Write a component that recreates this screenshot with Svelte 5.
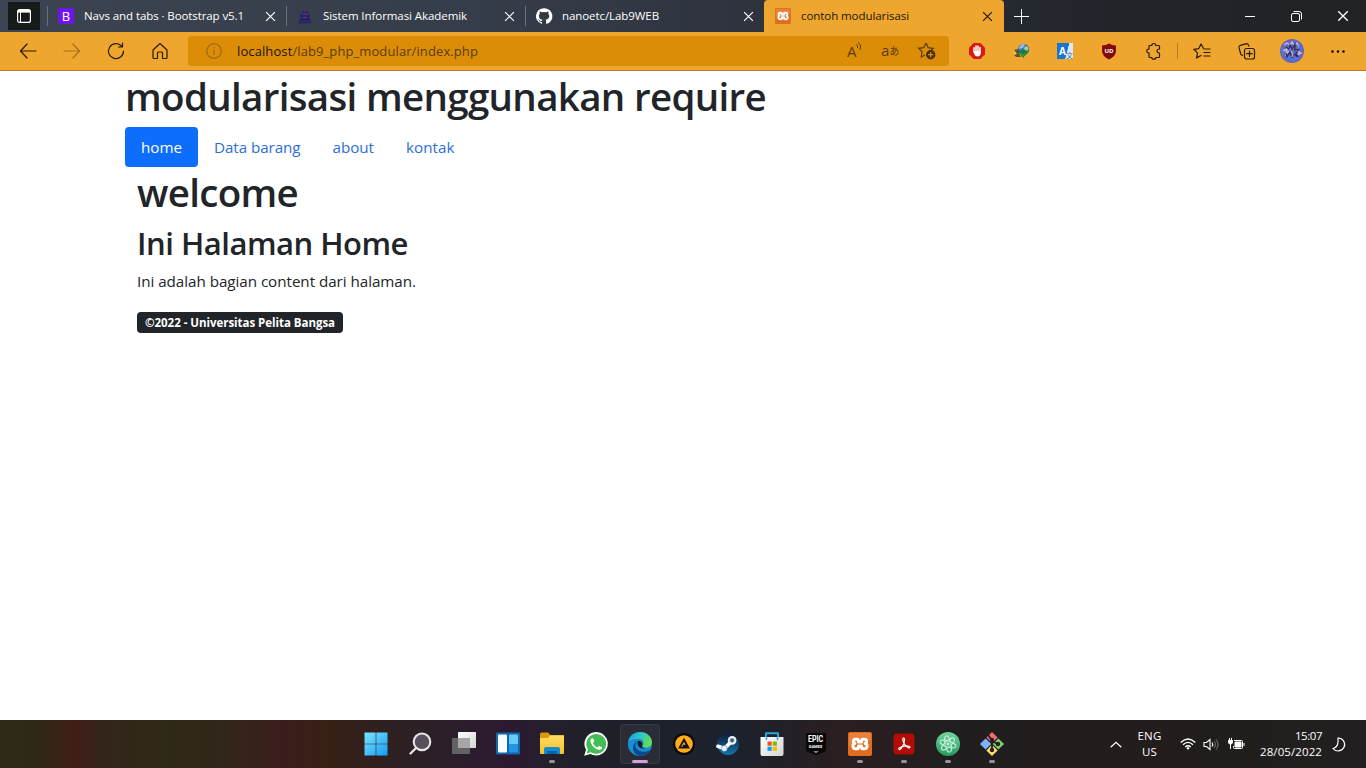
<script>
  // Spreads a label's letters evenly so that it takes the given width.
  function fit(node, width) {
    const natural = node.getBoundingClientRect().width;
    const spacing = (width - natural) / node.textContent.length;
    node.style.letterSpacing = `${spacing}px`;
  }

  const tabs = [
    { icon: 'bootstrap', title: 'Navs and tabs · Bootstrap v5.1', width: 160 },
    { icon: 'campus', title: 'Sistem Informasi Akademik', width: 144 },
    { icon: 'github', title: 'nanoetc/Lab9WEB', width: 97 },
    { icon: 'xampp', title: 'contoh modularisasi', width: 108, active: true }
  ];
  const links = [
    { label: 'home', width: 41, active: true },
    { label: 'Data barang', width: 86.5 },
    { label: 'about', width: 41.5 },
    { label: 'kontak', width: 48.5 }
  ];
  const apps = [
    { icon: 'windows' }, { icon: 'search' }, { icon: 'taskview' }, { icon: 'widgets' },
    { icon: 'folder', open: true }, { icon: 'whatsapp' }, { icon: 'edge', current: true },
    { icon: 'aimp' }, { icon: 'steam' }, { icon: 'store' }, { icon: 'epic' },
    { icon: 'xampp', open: true }, { icon: 'acrobat', open: true },
    { icon: 'atom', open: true }, { icon: 'git', open: true }
  ];
</script>

{#snippet icon(name, size)}
  <svg class="icon" width={size} height={size} viewBox="0 0 24 24" fill="none" stroke-linecap="round" stroke-linejoin="round">
    {#if name === 'bootstrap'}
      <rect width="24" height="24" rx="3" fill="#7014ee" />
    {:else if name === 'campus'}
      <path d="M2 23h20l-2-4 1-1-2-2v-6l-3-4-4-5-4 5-3 4v6l-2 2 1 1z" fill="#24215c" />
      <path d="M7 10h10M5 15h14M4 20h16M9 6v4M15 6v4" stroke="#30308c" stroke-width="1.5" />
      <path d="M12 2v4M9 9h6M10 14h4" stroke="#81395e" stroke-width="1.5" />
    {:else if name === 'github'}
      <path fill="#fff" d="M12 .3a12 12 0 0 0-3.8 23.4c.6.1.8-.3.8-.6v-2.2c-3.3.7-4-1.4-4-1.4-.6-1.4-1.4-1.8-1.4-1.8-1-.7.1-.7.1-.7 1.2 0 1.9 1.2 1.9 1.2 1 1.8 2.8 1.3 3.5 1 .1-.8.4-1.3.8-1.6-2.7-.3-5.5-1.3-5.5-6 0-1.2.5-2.3 1.3-3.1-.2-.4-.6-1.6 0-3.2 0 0 1-.3 3.4 1.2a11.5 11.5 0 0 1 6 0c2.3-1.5 3.3-1.2 3.3-1.2.7 1.6.2 2.8.1 3.2.8.8 1.3 1.9 1.3 3.2 0 4.6-2.8 5.6-5.5 5.9.5.4.9 1.1.9 2.3v3.3c0 .3.1.7.8.6A12 12 0 0 0 12 .3" />
    {:else if name === 'xampp'}
      <rect width="24" height="24" rx="2" fill="#e06c20" />
      <path d="M1 1h22v7Q12 8 1 14z" fill="#f08d48" opacity=".65" />
      <path d="M7.5 7.2h1.6q1.3 0 1.3 1.4V10h3.200V8.600q0-1.400 1.300-1.400h1.600a2.200 2.200 0 0 1 .6 4.300 2.700 2.700 0 0 1-.6 5.300h-1.600q-1.300 0-1.300-1.400V14h-3.200v1.400q0 1.400-1.300 1.400H7.500a2.700 2.700 0 0 1-.6-5.300 2.200 2.200 0 0 1 .6-4.300z" stroke="#fff" stroke-width="3" />
    {:else if name === 'windows'}
      <path d="M.5.5h11.2v11.2H.5zM12.3.5h11.2v11.2H12.3zM.5 12.3h11.2v11.2H.5zM12.3 12.3h11.2v11.2H12.3z" fill="url(#win)" />
    {:else if name === 'search'}
      <circle cx="14" cy="9.8" r="8.3" fill="#55505b" stroke="#e8e6e9" stroke-width="2.1" />
      <path d="M8 16 2.5 21.5" stroke="#e8e6e9" stroke-width="2.3" />
    {:else if name === 'taskview'}
      <rect x="6" y="0" width="18" height="16" rx=".8" fill="url(#pale)" />
      <rect x="0" y="6" width="18" height="16" rx=".8" fill="#696969" opacity=".9" />
      <path d="M6 6h12v10H6z" fill="#a6a6a6" />
    {:else if name === 'widgets'}
      <rect y=".5" width="24" height="22" rx="1" fill="#1567ad" />
      <rect x="2" y="2.5" width="9" height="18" rx="1" fill="#f8fcff" />
      <rect x="13" y="2.5" width="9" height="10" rx="1" fill="#66cafb" />
      <rect x="13" y="12.5" width="9" height="8" rx="1" fill="#2296e6" />
    {:else if name === 'folder'}
      <path d="M0 2a1.5 1.5 0 0 1 1.5-1.5H8L10.5 3H24v6H0z" fill="#dc9a0a" />
      <path d="M0 6h8l2-2.5h13a1 1 0 0 1 1 1V21a1 1 0 0 1-1 1H1a1 1 0 0 1-1-1z" fill="url(#gold)" />
      <path d="M4 22v-5a2 2 0 0 1 2-2h12a2 2 0 0 1 2 2v5z" fill="#168bd5" />
      <path d="M7 22v-3h10v3" fill="#0b66a7" />
    {:else if name === 'whatsapp'}
      <path d="M.2 23.8 2 17.7A11.7 11.7 0 1 1 6.4 22z" fill="#fff" />
      <path d="m2.7 21.4 1.2-4.2a9.9 9.9 0 1 1 3 3z" fill="#43bd55" />
      <path d="M7.6 6.4c-.8.4-1.6 1.8-1.1 3.3 1 3.7 4.3 7.2 8.3 8.1 1.6.3 3.1-.8 3.3-2.3l-3-1.8-1.6 1.7c-2.2-.7-3.7-2.2-4.6-4.3L10.3 9 9 6.3z" fill="#fff" />
    {:else if name === 'edge'}
      <circle cx="12" cy="12" r="12" fill="#168cd5" />
      <path d="M.2 10C1.2 3.6 6.2 0 12 0c7 0 12 5 12 10 0 3.7-2.5 5.5-5.7 5.5-2.5 0-4.3-.8-3.7-2 2.6-4.2-1.1-7.2-5-6.6C5.2 6.9 1.4 8.5.2 10z" fill="url(#edgeTop)" />
      <path d="M10 8.2C5.7 9 4.5 15.5 8 19.4c2.4 2.7 5.7 4.2 8.2 3.8A12 12 0 0 1 .2 10c2.5-2.6 6.1-3.4 9.8-1.8z" fill="#158fd6" />
      <path d="M10 8.2c-3.6 2.3-3.5 7.4.1 9.8 3.5 2.5 8.5 2.4 12.3-.3A12 12 0 0 1 13 24c-5.8-.6-8-4.2-8-8 0-3.4 2-6.6 5-7.8z" fill="#0d4a8c" />
      <path d="M10 9c2.8-.5 5.3 1.6 4.2 4.2-.8 1.9.4 3.1 3.1 3.3-4.8 1.4-9.5-3.7-7.3-7.5z" fill="#211e26" />
    {:else if name === 'aimp'}
      <circle cx="12" cy="12" r="12" fill="#090909" />
      <circle cx="12" cy="12" r="9.6" fill="#ffad18" />
      <path d="M12 5.2 18.500 17H5.500z" fill="#151515" />
      <path d="m12 9.500 1.700 3.300H11L10.200 15H8.700z" fill="#ffad18" />
    {:else if name === 'steam'}
      <circle cx="12" cy="12" r="12" fill="url(#steam)" />
      <path d="m1 14.5 7 2.5 6-6" stroke="#fff" stroke-width="4" />
      <circle cx="16.5" cy="8" r="4.7" fill="#f6f8fb" />
      <circle cx="16.5" cy="8" r="2.5" fill="#32618c" stroke="#bdcfdf" stroke-width=".7" />
      <circle cx="8" cy="16.8" r="3.3" fill="#edf1f5" stroke="#24679c" stroke-width=".5" />
    {:else if name === 'store'}
      <path d="M6 7V1.3h12V7" stroke="#2aa6de" stroke-width="2" />
      <path d="M.5 5h23v17a2 2 0 0 1-2 2h-19a2 2 0 0 1-2-2z" fill="url(#pale)" />
      <path d="M7.5 9.500h4.200v4.200H7.500z" fill="#f25022" /><path d="M12.700 9.500h4.200v4.200h-4.200z" fill="#7fba00" />
      <path d="M7.500 14.700h4.200v4.200H7.500z" fill="#00a4ef" /><path d="M12.700 14.700h4.200v4.200h-4.200z" fill="#ffb900" />
      <path d="M6.500 5v2.500M17.500 5v2.500" stroke="#2aa6de" stroke-width="1.500" />
    {:else if name === 'epic'}
      <path d="M1 0h22v18.500q0 1.500-2 2.200L12 24l-9-3.300q-2-.7-2-2.200z" fill="#080808" />
      <path d="M9 20.200h6l-3 1.400z" fill="#fff" />
    {:else if name === 'acrobat'}
      <rect x="1.5" y="1.5" width="21" height="21" rx="4" fill="#b30c04" />
      <path d="M11.6 6.2c-1.6 0-.6 3.8 1 6.1 1.4 2.2 3.8 4 4.9 3.4 1.6-.9-1.3-2.1-4.8-1.6-3.8.5-6.7 2-5.8 3.2 1 1.2 3.4-2.2 4.6-5 1.1-2.700 1.500-6.100.1-6.100z" stroke="#fff" stroke-width="1.2" />
    {:else if name === 'atom'}
      <circle cx="12" cy="12" r="12" fill="url(#atom)" />
      <g stroke="#c5eed9" stroke-width="1"><ellipse cx="12" cy="12" rx="3" ry="8.3" transform="rotate(-12 12 12)" /><ellipse cx="12" cy="12" rx="3" ry="8.3" transform="rotate(48 12 12)" /><ellipse cx="12" cy="12" rx="3" ry="8.3" transform="rotate(108 12 12)" /></g>
      <circle cx="12" cy="12" r="1.4" fill="#d2f5e3" />
    {:else if name === 'git'}
      <path d="m12 0 5.6 5.6L12 11.2 6.4 5.6z" fill="#ef6b76" />
      <path d="m5.6 6.4 5.6 5.6-5.6 5.6L0 12z" fill="#80b3ff" />
      <path d="m18.4 6.4 5.6 5.6-5.6 5.6-5.6-5.6z" fill="#80d26c" />
      <path d="m12 12.8 5.6 5.6L12 24l-5.6-5.6z" fill="#ffe06c" />
      <path d="m8.5 3.5 3.500 5v10M12 8.500l6 4" stroke="#251e20" stroke-width="1.8" />
      <circle cx="12" cy="8" r="2.2" fill="#251e20" /><circle cx="12" cy="18" r="2.2" fill="#251e20" /><circle cx="18" cy="12" r="2.2" fill="#251e20" />
    {/if}
  </svg>
{/snippet}

{#snippet cross(size)}
  <svg width={size} height={size} viewBox="0 0 10 10" fill="none" stroke="currentColor" stroke-width="1.1"><path d="m1 1 8 8M9 1 1 9" /></svg>
{/snippet}

<svg class="defs" width="0" height="0" aria-hidden="true">
  <defs>
    <linearGradient id="win" x2="1" y2="1"><stop stop-color="#7be3ff" /><stop offset="1" stop-color="#159df5" /></linearGradient>
    <linearGradient id="pale" x2="1" y2="1"><stop stop-color="#fff" /><stop offset="1" stop-color="#d4d4d4" /></linearGradient>
    <linearGradient id="gold" x2="0" y2="1"><stop stop-color="#ffdc61" /><stop offset="1" stop-color="#f9bf25" /></linearGradient>
    <linearGradient id="edgeTop" x2="1" y2=".4"><stop stop-color="#1895da" /><stop offset=".5" stop-color="#2dc4ca" /><stop offset="1" stop-color="#65db55" /></linearGradient>
    <linearGradient id="steam" x2="0" y2="1"><stop stop-color="#101936" /><stop offset="1" stop-color="#1476a8" /></linearGradient>
    <linearGradient id="atom" x2="0" y2="1"><stop stop-color="#72d39b" /><stop offset="1" stop-color="#279b63" /></linearGradient>
  </defs>
</svg>

<div class="screen">
  <header class="tabstrip">
    <div class="actions">
      <svg width="16" height="16" viewBox="0 0 16 16" fill="none" stroke="#fff" stroke-width="1.2"><rect x="1.6" y="1.6" width="12.8" height="12.8" rx="2" /><path d="M2 3.3h12" stroke-width="2.6" /><path d="M4.5 4v10" stroke-width="1" /></svg>
    </div>
    {#each tabs as tab}
      <div class="tab" class:active={tab.active}>
        <span class="favicon">{@render icon(tab.icon, 16)}{#if tab.icon === 'bootstrap'}<b>B</b>{/if}</span>
        <span class="title"><span class="fit" use:fit={tab.width}>{tab.title}</span></span>
        {@render cross(11)}
      </div>
    {/each}
    <svg class="plus" width="15" height="15" viewBox="0 0 15 15" stroke="#fff" stroke-width="1"><path d="M7.5 0v15M0 7.5h15" /></svg>
    <div class="controls">
      <svg width="10" height="10" viewBox="0 0 10 10" stroke="#fff"><path d="M0 5.500h10" /></svg>
      <svg width="11" height="11" viewBox="0 0 11 11" fill="none" stroke="#fff"><rect x=".5" y="2.5" width="8" height="8" rx="1.5" /><path d="M2.500.5H8A2.500 2.500 0 0 1 10.500 3v5.500" /></svg>
      {@render cross(12)}
    </div>
  </header>

  <div class="toolbar">
    <div class="tool"><svg width="18" height="16" viewBox="0 0 18 16" class="line"><path d="M8 1 1.500 8 8 15M1.500 8H17" /></svg></div>
    <div class="tool dim"><svg width="18" height="16" viewBox="0 0 18 16" class="line"><path d="m10 1 6.500 7-6.500 7M16.500 8H1" /></svg></div>
    <div class="tool"><svg width="18" height="18" viewBox="0 0 18 18" class="line"><path d="M14.500 4A7.500 7.500 0 1 0 16.500 9M15.500 1v4h-4" /></svg></div>
    <div class="tool"><svg width="18" height="18" viewBox="0 0 18 18" class="line"><path d="M2 8 9 1.500 16 8v7.500a1 1 0 0 1-1 1h-3.500V11a1 1 0 0 0-1-1h-3a1 1 0 0 0-1 1v5.500H3a1 1 0 0 1-1-1z" /></svg></div>
    <div class="address">
      <svg class="info" width="16" height="16" viewBox="0 0 16 16" fill="none" stroke="#9a6514" stroke-width="1.1"><circle cx="8" cy="8" r="7.3" /><path d="M8 7v5M8 4v1.400" /></svg>
      <span class="url"><span class="fit" use:fit={241}><i>localhost</i>/lab9_php_modular/index.php</span></span>
      <span class="read">A<svg width="6" height="10" viewBox="0 0 6 10" fill="none" stroke="currentColor"><path d="M-.5 2.500q1.700 1.500 1 3.500M1.500.5q3.500 3 1.500 7.500" /></svg></span>
      <span class="translate">a<small>あ</small></span>
      <svg class="star" width="18" height="18" viewBox="0 0 18 18" fill="none" stroke="#5a3d0b" stroke-width="1.2"><path d="m8 1 2.200 4.600 5.100.7-3.700 3.500M7 13l-3.700 2 .8-5.200L.7 6.300l5.100-.7L8 1" /><circle cx="12.700" cy="12.700" r="4.700" fill="#46300e" stroke="none" /><path d="M12.700 10v5.400M10 12.700h5.400" stroke="#dc8d08" /></svg>
    </div>
    <div class="tool"><svg width="16" height="16" viewBox="0 0 16 16"><path d="M4.700 0h6.600L16 4.700v6.600L11.300 16H4.700L0 11.300V4.700z" fill="#da1710" /><path d="M5 9V4.800M7 8V3M9 8V3M11 9V4.500" stroke="#fff" stroke-width="1.5" stroke-linecap="round" /><path d="M4.300 8h7.500v2.500q-.6 3-3.200 3-2.400 0-3.200-2z" fill="#fff" /></svg></div>
    <div class="tool"><svg width="17" height="16" viewBox="0 0 17 16"><path d="m.5 8 4-2 4 5-2 3-5-1z" fill="#e6cd53" /><circle cx="10.500" cy="6.500" r="5.700" fill="#3477ae" /><path d="M6 4q3-4 6-3l-2 4-4 1z" fill="#95bce0" /><path d="m12 3 3 1q1 3-1 4l-3-2z" fill="#b7c97b" /><path d="m1 7 4-1 2 4-3 1zM1 12l5-2 2 4H3z" fill="#62512d" /><path d="m5.500 8.500 4-1.500 6 1-5.500 7z" fill="#168035" /><path d="m7 9 3 2 3-2-3 5z" fill="#2f9d3c" /></svg></div>
    <div class="tool"><span class="translator"><b>A</b><em>文</em></span></div>
    <div class="tool"><span class="shield"><svg width="16" height="17" viewBox="0 0 16 17"><path d="M8 .5q3 2 7 2V8q0 5-7 8.500Q1 13 1 8V2.500q4 0 7-2z" fill="#850909" /></svg><b>UD</b></span></div>
    <div class="tool"><svg width="17" height="17" viewBox="0 0 17 17" class="line"><path d="M5 2.500h1.800c0-2.700 4-2.700 4 0H13.500a1 1 0 0 1 1 1V6c-3.300-.2-3.300 4.200 0 4v3.500a1 1 0 0 1-1 1h-2.700c0 2.300-4 2.300-4 0H5a1 1 0 0 1-1-1V10C1 10.200 1 5.800 4 6V3.500a1 1 0 0 1 1-1z" /></svg></div>
    <span class="divider"></span>
    <div class="tool"><svg width="18" height="17" viewBox="0 0 18 17" class="line"><path d="M10.500 5.500 8 1 5.800 5.600l-5 .8 3.700 3.500-.9 5L8 12.500M11.500 6H17M11 9.500h6M11 13h6" /></svg></div>
    <div class="tool"><svg width="17" height="17" viewBox="0 0 17 17" class="line"><rect x="6.500" y="5.500" width="10" height="10.500" rx="2" /><path d="M11.500 8v5.500M8.700 10.700h5.500M4.500 12.500Q3 12 2.600 10.500L1 4.700Q.7 3 2.300 2.400l5.500-1.600q2-.5 2.700 1.500l.3.800" /></svg></div>
    <div class="tool profile"><svg width="24" height="24" viewBox="0 0 24 24"><circle cx="12" cy="12" r="12" fill="#6268ba" /><path d="m4 6 3-2 3 2 2-3 2 3 3-2 2 4M3 12l4-2-1 5 3-3M19 9l-2 3 4 2-4 2M9 8l1 3" fill="none" stroke="#cdb9e2" stroke-width="1.4" /><path d="m6 8 3 2 1-4 2 4 3-5v6l4-1-3 4 2 4-4-3-2 4-2-6-3 5-1-4" fill="none" stroke="#2a2860" stroke-width="1.2" /><path d="m2 9 1 7M6 21l3-3 4 3 5-2M19 6l2 5" fill="none" stroke="#427eea" stroke-width="1.6" /><path d="m11 12 2 3-1 3" fill="none" stroke="#cdaed6" stroke-width="1.3" /></svg></div>
    <div class="tool more"><svg width="14" height="3" viewBox="0 0 14 3"><circle cx="1.5" cy="1.5" r="1.2" /><circle cx="7" cy="1.5" r="1.2" /><circle cx="12.5" cy="1.5" r="1.2" /></svg></div>
  </div>

  <main>
    <h1><span class="fit" use:fit={641}>modularisasi menggunakan require</span></h1>
    <nav>
      {#each links as link}
        <a href="#{link.label}" class:current={link.active}><span class="fit" use:fit={link.width}>{link.label}</span></a>
      {/each}
    </nav>
    <section>
      <h1><span class="fit" use:fit={161}>welcome</span></h1>
      <h2><span class="fit" use:fit={271}>Ini Halaman Home</span></h2>
      <p><span class="fit" use:fit={279}>Ini adalah bagian content dari halaman.</span></p>
      <div class="badge"><span class="fit" use:fit={190}>©2022 - Universitas Pelita Bangsa</span></div>
    </section>
  </main>

  <footer>
    <div class="apps">
      {#each apps as app}
        <div class="app" class:open={app.open} class:current={app.current}>
          {@render icon(app.icon, app.icon === 'aimp' || app.icon === 'steam' || app.icon === 'epic' ? 22 : 24)}
          {#if app.icon === 'epic'}<span class="epic"><b>EPIC</b><b class="games">GAMES</b></span>{/if}
        </div>
      {/each}
    </div>
    <div class="tray">
      <svg class="chevron" width="12" height="7" viewBox="0 0 12 7" fill="none" stroke="#fff" stroke-width="1.2"><path d="m.7 6.200 5.300-5 5.300 5" /></svg>
      <div class="language"><span class="fit" use:fit={24}>ENG</span><span class="fit" use:fit={15}>US</span></div>
      <svg class="wifi" width="16" height="12" viewBox="0 0 16 12" fill="none" stroke="#fff" stroke-width="1.3"><path d="M.7 4.500q7.300-7 14.600 0M3 6.800q5-4.800 10 0M5.200 9q2.800-2.500 5.600 0" /><circle cx="8" cy="10.300" r="1.2" fill="#fff" stroke="none" /></svg>
      <svg class="sound" width="16" height="13" viewBox="0 0 16 13" fill="none" stroke="#fff" stroke-width="1.1"><path d="M1 4.500h2.500L7 1.500v10l-3.500-3H1z" /><path d="M9 4.500q1.500 2 0 4" /><path d="M11 3q3 3.500 0 7M13 1.500q4 5 0 10" stroke="#666" /></svg>
      <svg class="battery" width="17" height="13" viewBox="0 0 17 13" fill="none" stroke="#fff"><path d="M6 2.500h7.500a1 1 0 0 1 1 1v6a1 1 0 0 1-1 1h-7a1 1 0 0 1-1-1V8M16 5v3" /><path d="M7 4h6v5H7z" fill="#fff" /><path d="M.5 2.500h4v2Q4.500 6 2.500 6t-2-1.500zM1.500 0v2M3.500 0v2M2.500 6v5" fill="#fff" /></svg>
      <div class="clock"><span class="fit" use:fit={27}>15:07</span><span class="fit" use:fit={62}>28/05/2022</span></div>
      <svg class="moon" width="14" height="15" viewBox="0 0 14 15" fill="none" stroke="#fff" stroke-width="1.2"><path d="M6 1a6.500 6.500 0 1 1-5 10.500Q7 10 6 1z" /></svg>
    </div>
  </footer>
</div>

<style>
  :global(body) { margin: 0; overflow: hidden; }
  .screen, .screen * { box-sizing: border-box; }
  .screen { width: 1366px; height: 768px; display: flex; flex-direction: column; background: #fff; color: #212529; font-family: "Open Sans", "Noto Sans", sans-serif; }
  .defs { display: block; height: 0; }
  svg { display: block; flex: none; overflow: visible; }
  .fit { display: inline-block; white-space: nowrap; }
  .tabstrip { height: 32px; flex: none; display: flex; align-items: center; background: linear-gradient(90deg, #3d4451, #363d4a 35%, #2a2e38 65%, #212429 82%, #202225); color: #fff; }
  .actions { width: 32px; height: 28px; margin: 0 7px 0 8px; background: #171a1b; display: grid; place-items: center; }
  .tab { width: 239px; height: 32px; display: flex; align-items: center; padding: 0 10.5px 0 11px; background: linear-gradient(#69707a, #69707a) 0 50% / 1px 20px no-repeat; }
  .favicon { display: grid; width: 16px; height: 16px; margin-right: 10px; place-items: center; }
  .favicon > :global(*) { grid-area: 1 / 1; }
  .favicon b { font: 500 13px/16px "Open Sans", sans-serif; }
  .title { flex: 1; font-size: 11.5px; line-height: 18px; min-width: 0; }
  .tab.active { width: 240px; margin-left: 0; padding-right: 11px; background: #eea62e; color: #211707; border-radius: 4px 4px 0 0; }
  .plus { margin-left: 10px; }
  .controls { margin-left: auto; padding-right: 17px; display: flex; align-items: center; gap: 35.5px; }
  .toolbar { height: 39px; flex: none; display: flex; align-items: center; padding: 0 4px 0 6px; background: #eea62e; border-bottom: 1px solid #b9782a; color: #281b07; }
  .tool { width: 44px; flex: none; display: grid; place-items: center; }
  .tool.dim { color: #a6701b; }
  .line { fill: none; stroke: currentColor; stroke-width: 1.2; stroke-linejoin: round; stroke-linecap: round; }
  .address { width: 761px; height: 30px; margin: 0 6px; padding: 0 13px 0 18px; display: flex; align-items: center; border-radius: 3px; background: #dc8d08; color: #5b3c0b; }
  .url { flex: 1; padding-left: 15px; font-size: 13px; }
  .url i { font-style: normal; color: #1b1206; }
  .read { width: 17px; display: flex; font-size: 15px; line-height: 18px; margin-right: 17px; }
  .translate { width: 18px; font-size: 15px; line-height: 15px; margin-right: 19px; display: flex; }
  .translate small { font: 10px/16px "Noto Sans CJK JP", sans-serif; }
  .translator { display: flex; align-items: flex-end; width: 16px; height: 16px; background: linear-gradient(105deg, #1676d1 60%, #dce8f5 62%); overflow: hidden; }
  .translator b { color: #fff; font: 700 10px/16px "Open Sans", sans-serif; padding-left: 2px; }
  .translator em { color: #3178bb; font: 7px/8px "Noto Sans CJK SC", sans-serif; }
  .shield { display: grid; place-items: center; }
  .shield > * { grid-area: 1 / 1; }
  .shield b { color: #fff; font: 700 6px/8px "Open Sans", sans-serif; }
  .divider { width: 1px; height: 16px; margin: 0 2px; background: #b67a20; }
  .profile { width: 48px; }
  .more { width: 44px; }
  main { flex: 1; width: 1116px; margin: 0 auto; }
  h1, h2 { margin: 0 0 8px; }
  h1 { font-size: 38.5px; line-height: 45px; height: 48px; padding-top: 3px; font-weight: 550; }
  h2 { font-size: 31px; line-height: 38px; padding-top: 1px; margin-bottom: 7px; font-weight: 550; }
  nav { display: flex; height: 40px; }
  nav a { padding: 8px 16px; color: #2d6fd8; font-size: 15.2px; line-height: 24px; border-radius: 4px; text-decoration: none; font-weight: 380; }
  nav a.current { background: #0d6efd; color: #fff; font-weight: 400; }
  section { padding-left: 12px; }
  p { margin: 0 0 19px; font-size: 15.2px; line-height: 24px; font-weight: 380; }
  .badge { width: 206px; height: 21px; padding: 0 8px; border-radius: 4px; background: #212529; color: #fff; font-size: 11.5px; line-height: 21px; font-weight: 700; }
  footer { height: 48px; flex: none; display: flex; align-items: center; padding-left: 354px; background: linear-gradient(90deg, #2f2a17 0, #302817 40px, #411d17 76px, #34251b 100px, #2f2917 160px, #31271a 220px, #3b1d1c 278px, #382015 325px, #30201d 370px, #2b2028 430px, #2c1931 510px, #23202b 550px, #1e2029 610px, #1c222d 730px, #2a1e20 840px, #211e1f 960px, #231c1c 1090px, #211f1f 1366px); color: #fff; }
  .apps { display: flex; margin-left: -.5px; }
  .app { width: 44px; height: 48px; padding-bottom: 1px; display: grid; place-items: center; position: relative; }
  .app::after { content: ''; position: absolute; bottom: 5px; left: 19px; width: 6px; height: 3px; border-radius: 2px; }
  .app.open::after { background: #99949a; }
  .app.current::before { content: ''; position: absolute; inset: 4px 2px; border-radius: 4px; background: rgb(255 240 240 / 6%); border: 1px solid rgb(255 255 255 / 6%); }
  .app.current::after { left: 14px; width: 16px; background: #d59edb; }
  .app > :global(svg) { grid-area: 1 / 1; position: relative; }
  .epic { grid-area: 1 / 1; position: relative; display: grid; text-align: center; padding-bottom: 2px; }
  .epic b { font: 700 7px/9px "Roboto", sans-serif; transform: scaleY(1.4); }
  .epic .games { font-size: 4px; line-height: 6px; transform: none; }
  .tray { margin-left: auto; display: flex; align-items: center; font-size: 11.5px; line-height: 16px; }
  .language { display: grid; justify-items: center; width: 25px; margin: 0 18px 0 15px; }
  .chevron { margin-left: 1px; }
  .sound { margin-left: 7px; }
  .battery { margin-left: 9px; }
  .clock { display: grid; justify-items: end; width: 62px; margin: 0 10px 0 15px; }
  .moon { margin-right: 20px; }
</style>
